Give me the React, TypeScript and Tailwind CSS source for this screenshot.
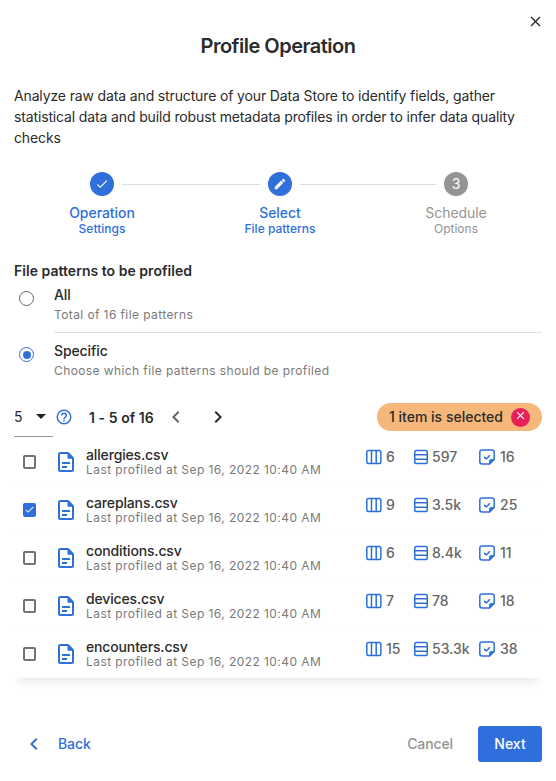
import React from "react";

type IconProps = { d: string; className?: string; size?: number };

const MdIcon = ({ d, className = "", size = 24 }: IconProps) => (
  <svg viewBox="0 0 24 24" width={size} height={size} fill="currentColor" className={`shrink-0 ${className}`}>
    <path d={d} />
  </svg>
);

const CLOSE = "M19,6.41L17.59,5L12,10.59L6.41,5L5,6.41L10.59,12L5,17.59L6.41,19L12,13.41L17.59,19L19,17.59L13.41,12L19,6.41Z";
const CHECK = "M21,7L9,19L3.5,13.5L4.91,12.09L9,16.17L19.59,5.59L21,7Z";
const PENCIL = "M20.71,7.04C21.1,6.65 21.1,6 20.71,5.63L18.37,3.29C18,2.9 17.35,2.9 16.96,3.29L15.12,5.12L18.87,8.87M3,17.25V21H6.75L17.81,9.93L14.06,6.18L3,17.25Z";
const LEFT = "M15.41,16.58L10.83,12L15.41,7.41L14,6L8,12L14,18L15.41,16.58Z";
const RIGHT = "M8.59,16.58L13.17,12L8.59,7.41L10,6L16,12L10,18L8.59,16.58Z";
const HELP = "M11,18H13V16H11V18M12,2A10,10 0 0,0 2,12A10,10 0 0,0 12,22A10,10 0 0,0 22,12A10,10 0 0,0 12,2M12,20C7.59,20 4,16.41 4,12C4,7.59 7.59,4 12,4C16.41,4 20,7.59 20,12C20,16.41 16.41,20 12,20M12,6A4,4 0 0,0 8,10H10A2,2 0 0,1 12,8A2,2 0 0,1 14,10C14,12 11,11.75 11,15H13C13,12.75 16,12.5 16,10A4,4 0 0,0 12,6Z";

const FileIcon = () => (
  <svg width="16" height="20" viewBox="0 0 16 20" fill="none" className="shrink-0 text-[#2f6fdb]">
    <path d="M10 1H2.5A1.5 1.5 0 0 0 1 2.5v15A1.5 1.5 0 0 0 2.500 19h11a1.500 1.500 0 0 0 1.500-1.500V6.200Z" stroke="currentColor" strokeWidth="2" />
    <path d="M9.500 1v5.700H15.500Z" fill="currentColor" />
    <path d="M4 11h8M4 15h5" stroke="currentColor" strokeWidth="1.900" />
  </svg>
);

const ColumnsIcon = () => (
  <svg width="16" height="16" viewBox="0 0 16 16" fill="none" stroke="#2f6fdb" strokeWidth="1.500" className="shrink-0">
    <rect x="0.800" y="1.500" width="14" height="13" rx="1.800" />
    <path d="M5.500 1.500v13M10.200 1.500v13" />
  </svg>
);

const RowsIcon = () => (
  <svg width="14" height="16" viewBox="0 0 14 16" fill="none" stroke="#2f6fdb" strokeWidth="1.500" className="shrink-0">
    <rect x="0.750" y="1.500" width="12.500" height="13" rx="1.800" />
    <path d="M0.700 5.800h12.600M0.700 10.200h12.600" />
  </svg>
);

const CheckNoteIcon = () => (
  <svg width="16" height="16" viewBox="0 0 16 16" fill="none" stroke="#2f6fdb" strokeWidth="1.500" className="shrink-0">
    <path d="M10.500 15H3A2.200 2.200 0 0 1 0.800 12.800V3.200A2.200 2.200 0 0 1 3 1H13A2.200 2.200 0 0 1 15.200 3.200V10.500Z" />
    <path d="M10.500 15V12a1.500 1.500 0 0 1 1.500-1.500H15.200Z" fill="#2f6fdb" strokeWidth="0.800" />
    <path d="M5 7.800 7.200 10 11 6.200" />
  </svg>
);

const Step = ({ title, sub, active, children, className }: { title: string; sub: string; active: boolean; children: React.ReactNode; className: string }) => (
  <div className={`flex flex-col items-center ${active ? "text-[#2f6fdb]" : "text-[#949494]"} ${className}`}>
    <div className={`flex size-6 items-center justify-center rounded-full text-white ${active ? "bg-[#2f6fdb]" : "bg-[#949494]"}`}>{children}</div>
    <div className={`mt-2 text-sm leading-[18px] whitespace-nowrap ${active ? "font-medium tracking-[-0.05px]" : "tracking-[-0.05px]"}`}>{title}</div>
    <div className={`text-xs leading-[14px] whitespace-nowrap ${active ? "font-medium" : ""}`}>{sub}</div>
  </div>
);

const Radio = ({ title, sub, checked }: { title: string; sub: string; checked: boolean }) => (
  <div className="flex h-14">
    <div className="w-10 pt-[14px] pl-[5px]">
      <div className={`flex size-[15px] items-center justify-center rounded-full border-[1.500px] ${checked ? "border-[#2f6fdb]" : "border-[#666]"}`}>
        {checked && <div className="size-[8px] rounded-full bg-[#2f6fdb]" />}
      </div>
    </div>
    <div className={`flex-1 pt-[9px] ${checked ? "" : "border-b border-[#dedede]"}`}>
      <div className="text-sm leading-[18px] font-medium tracking-[-0.1px]">{title}</div>
      <div className="mt-[2px] text-xs leading-[18px] tracking-[0.4px] text-[#7a7a7a]">{sub}</div>
    </div>
  </div>
);

const files = [
  { name: "allergies.csv", cols: "6", rows: "597", checks: "16", on: false },
  { name: "careplans.csv", cols: "9", rows: "3.5k", checks: "25", on: true },
  { name: "conditions.csv", cols: "6", rows: "8.4k", checks: "11", on: false },
  { name: "devices.csv", cols: "7", rows: "78", checks: "18", on: false },
  { name: "encounters.csv", cols: "15", rows: "53.3k", checks: "38", on: false },
];

export default function App() {
  return (
    <div className="h-[781px] w-[556px] overflow-hidden bg-white font-['Inter',sans-serif] text-[#2b2b2b]">
      <div className="flex h-[34px] justify-end pt-[13px] pr-[12.5px]">
        <MdIcon d={CLOSE} size={17} />
      </div>
      <h1 className="text-center text-xl leading-6 font-semibold tracking-[-0.5px]">Profile Operation</h1>
      <p className="mt-[27px] px-3.5 text-sm leading-[21px] tracking-[-0.14px]">
        Analyze raw data and structure of your Data Store to identify fields, gather
        <br />
        statistical data and build robust metadata profiles in order to infer data quality
        <br />
        checks
      </p>

      <div className="mt-6 flex h-[84px] pl-[62px]">
        <Step title="Operation" sub="Settings" active className="w-20">
          <MdIcon d={CHECK} size={14} />
        </Step>
        <div className="mt-3 -ml-5 h-px w-[138px] bg-[#dedede]" />
        <Step title="Select" sub="File patterns" active className="-ml-4 w-[72px]">
          <MdIcon d={PENCIL} size={14} />
        </Step>
        <div className="mt-3 -ml-4 h-px w-[136px] bg-[#dedede]" />
        <Step title="Schedule" sub="Options" active={false} className="-ml-5 w-20">
          <span className="text-sm leading-none">3</span>
        </Step>
      </div>

      <div className="px-3.5">
        <h2 className="mt-1.5 text-sm leading-[18px] font-semibold tracking-[0.03px]">File patterns to be profiled</h2>
        <div className="-mt-[3px]">
          <Radio title="All" sub="Total of 16 file patterns" checked={false} />
          <Radio title="Specific" sub="Choose which file patterns should be profiled" checked />
        </div>

        <div className="mt-2 flex h-[41px]">
          <div className="flex h-10 w-[39px] items-center border-b border-[#999]">
            <span className="w-[22px] text-sm">5</span>
            <span className="border-x-[5px] border-t-[5px] border-x-transparent border-t-[#222]" />
          </div>
          <MdIcon d={HELP} size={18} className="mt-[11px] ml-0.5 text-[#2f6fdb]" />
          <span className="mt-3 ml-4 w-[75px] text-sm leading-[18px] font-semibold tracking-[0.06px] whitespace-nowrap">1 - 5 of 16</span>
          <MdIcon d={LEFT} size={24} className="mt-2 text-[#666]" />
          <MdIcon d={RIGHT} size={24} className="mt-2 ml-[18px]" />
          <div className="mt-1.5 ml-auto flex h-7 w-[165px] items-center rounded-full bg-[#f5b77a] pl-3 text-sm font-medium whitespace-nowrap">
            <span className="w-[115px]">1 item is selected</span>
            <span className="ml-[7px] flex size-[19px] items-center justify-center rounded-full bg-[#e6215a] pb-[3px] text-white">
              <MdIcon d={CLOSE} size={13} />
            </span>
          </div>
        </div>

        <div className="overflow-hidden pb-3.5">
          <div className="shadow-[0_8px_10px_-4px_rgba(0,0,0,0.09)]">
            {files.map((f) => (
              <div key={f.name} className="flex h-12 items-center border-b border-[#fcfcfc] bg-white">
                <div className={`ml-[9px] flex h-[14px] w-[13px] items-center justify-center rounded-[2px] ${f.on ? "bg-[#2f6fdb] text-white" : "border-2 border-[#737373]"}`}>
                  {f.on && <MdIcon d={CHECK} size={11} />}
                </div>
                <div className="ml-[22px]"><FileIcon /></div>
                <div className="ml-3 w-[280px]">
                  <div className="text-sm leading-4 font-medium tracking-[-0.15px]">{f.name}</div>
                  <div className="text-xs leading-[14px] tracking-[0.43px] text-[#7a7a7a]">Last profiled at Sep 16, 2022 10:40 AM</div>
                </div>
                <div className="mb-[9px] flex items-center text-sm leading-[18px] font-medium text-[#666]">
                  <ColumnsIcon />
                  <span className="ml-1 w-7">{f.cols}</span>
                  <RowsIcon />
                  <span className="ml-1 w-[47px]">{f.rows}</span>
                  <CheckNoteIcon />
                  <span className="ml-[5px]">{f.checks}</span>
                </div>
              </div>
            ))}
          </div>
        </div>
      </div>

      <div className="mt-[34px] flex h-9 items-center pr-3.5 pl-[22px] text-sm font-medium">
        <MdIcon d={LEFT} size={24} className="text-[#2f6fdb]" />
        <span className="ml-3 tracking-[-0.1px] text-[#2f6fdb]">Back</span>
        <span className="mr-[25px] ml-auto tracking-[-0.1px] text-[#949494]">Cancel</span>
        <button className="h-9 w-16 rounded-[3px] bg-[#2f6fdb] text-white">Next</button>
      </div>
    </div>
  );
}
